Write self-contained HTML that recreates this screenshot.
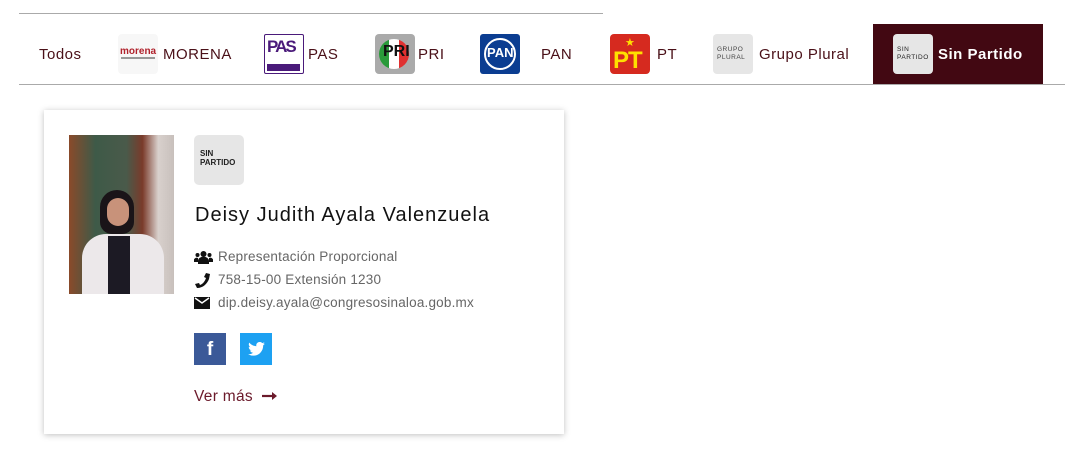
<!DOCTYPE html>
<html><head><meta charset="utf-8"><style>
*{margin:0;padding:0;box-sizing:border-box}
body{width:1065px;height:460px;background:#fff;font-family:"Liberation Sans",sans-serif;position:relative;overflow:hidden}
.a{position:absolute}
.t{position:absolute;top:46px;font-size:15px;color:#4a1018;letter-spacing:.5px}
.lg{position:absolute;top:34px;width:40px;height:40px;border-radius:4px}
.info{position:absolute;left:194px;font-size:13.5px;color:#666}
.info span{position:absolute;left:24px;white-space:nowrap;top:0;letter-spacing:.2px}
</style></head><body>
<div class="a" style="left:19px;top:13px;width:584px;height:1px;background:#aaa"></div>
<div class="a" style="left:19px;top:84px;width:1046px;height:1px;background:#aaa"></div>
<div class="a" style="left:873px;top:24px;width:170px;height:60px;background:#420812"></div>

<div class="t" style="left:39px">Todos</div>
<div class="lg" style="left:118px;background:#f7f7f7"><div class="a" style="left:2px;top:12px;font-size:10px;font-weight:bold;color:#b0222c">morena</div><div class="a" style="left:3px;top:23px;width:34px;height:2px;background:#999"></div></div>
<div class="t" style="left:163px">MORENA</div>
<div class="lg" style="left:264px;border:1.5px solid #4a1a7a;border-radius:2px;background:#fff"><div class="a" style="left:2px;top:2px;font-size:17px;font-weight:bold;color:#4a1a7a;letter-spacing:-2px">PAS</div><div class="a" style="left:2px;top:29px;width:33px;height:7px;background:#4a1a7a"></div></div>
<div class="t" style="left:308px">PAS</div>
<div class="lg" style="left:375px;background:#aaa"><div class="a" style="left:4px;top:5px;width:30px;height:30px;border-radius:15px;background:linear-gradient(90deg,#2a9a3a 33%,#fff 33% 66%,#e03030 66%)"></div><div class="a" style="left:8px;top:9px;font-size:16px;font-weight:bold;color:#111">PRI</div></div>
<div class="t" style="left:418px">PRI</div>
<div class="lg" style="left:480px;background:#0b3d91;border-radius:3px"><div class="a" style="left:4px;top:4px;width:32px;height:32px;border-radius:16px;border:2px solid #fff"></div><div class="a" style="left:7px;top:11px;font-size:13px;font-weight:bold;color:#fff">PAN</div></div>
<div class="t" style="left:541px">PAN</div>
<div class="lg" style="left:610px;background:#d62a1f"><div class="a" style="left:15px;top:2px;color:#ffe000;font-size:11px">★</div><div class="a" style="left:3px;top:13px;font-size:24px;font-weight:bold;color:#ffe000;letter-spacing:-1px">PT</div></div>
<div class="t" style="left:657px">PT</div>
<div class="lg" style="left:713px;background:#e6e6e6"><div class="a" style="left:4px;top:12px;font-size:6.5px;color:#444;line-height:8px;letter-spacing:.5px">GRUPO<br>PLURAL</div></div>
<div class="t" style="left:759px">Grupo Plural</div>
<div class="lg" style="left:893px;background:#e6e6e6"><div class="a" style="left:4px;top:12px;font-size:6.5px;color:#222;line-height:8px;letter-spacing:.5px">SIN<br>PARTIDO</div></div>
<div class="t" style="left:938px;color:#fff;font-weight:bold">Sin Partido</div>

<div class="a" style="left:44px;top:110px;width:520px;height:324px;background:#fff;box-shadow:0 1px 6px rgba(0,0,0,.25)"></div>
<div class="a" style="left:69px;top:135px;width:105px;height:159px;background:linear-gradient(90deg,#8a4a2a 0%,#3e5a48 25%,#4a5a4a 55%,#7a3a2a 70%,#d8d0cc 85%,#c8c0bc)"></div>
<div class="a" style="left:100px;top:190px;width:34px;height:44px;border-radius:17px 17px 12px 12px;background:#1a1418"></div>
<div class="a" style="left:107px;top:198px;width:22px;height:28px;border-radius:11px;background:#c8927a"></div>
<div class="a" style="left:82px;top:234px;width:82px;height:60px;border-radius:24px 24px 0 0;background:#ece8ea"></div>
<div class="a" style="left:108px;top:236px;width:22px;height:58px;background:#1c1a24"></div>
<div class="a" style="left:194px;top:135px;width:50px;height:50px;border-radius:5px;background:#e6e6e6"><div class="a" style="left:6px;top:14px;font-size:8px;font-weight:bold;color:#222;line-height:9px">SIN<br>PARTIDO</div></div>
<div class="a" style="left:195px;top:204px;font-size:20px;color:#111;letter-spacing:1px;white-space:nowrap">Deisy Judith Ayala Valenzuela</div>
<div class="info" style="top:249px"><svg class="a" style="left:0;top:2px" width="19" height="13" viewBox="0 0 19 13"><circle cx="9.5" cy="3" r="3" fill="#111"/><circle cx="3.5" cy="4" r="2" fill="#111"/><circle cx="15.5" cy="4" r="2" fill="#111"/><path d="M4 13v-3a5 4 0 0 1 11 0v3z M0 11a3 3 0 0 1 4-4v4z M19 11a3 3 0 0 0-4-4v4z" fill="#111"/></svg><span>Representación Proporcional</span></div>
<div class="info" style="top:272px"><svg class="a" style="left:1px;top:1px" width="15" height="15" viewBox="0 0 15 15"><path d="M11 0l4 1-1 5c-2 5-6 9-12 9l-2-4 4-1 1 2c3-1 5-4 6-7l-2-1z" fill="#111"/></svg><span>758-15-00 Extensión 1230</span></div>
<div class="info" style="top:295px"><svg class="a" style="left:0;top:2px" width="16" height="12" viewBox="0 0 16 12"><rect width="16" height="12" fill="#111"/><path d="M1 1l7 5 7-5" stroke="#fff" stroke-width="1.5" fill="none"/></svg><span>dip.deisy.ayala@congresosinaloa.gob.mx</span></div>
<div class="a" style="left:194px;top:333px;width:32px;height:32px;background:#3b5998;color:#fff;font-weight:bold;font-size:19px;text-align:center;line-height:34px">f</div>
<div class="a" style="left:240px;top:333px;width:32px;height:32px;background:#1da1f2"><svg style="position:absolute;left:8px;top:9px" width="17" height="14" viewBox="0 0 24 20"><path d="M24 2.4a10 10 0 0 1-2.8.8A5 5 0 0 0 23.3.4a10 10 0 0 1-3.1 1.2A4.9 4.9 0 0 0 11.8 6 14 14 0 0 1 1.7.9a4.9 4.9 0 0 0 1.5 6.6 4.9 4.9 0 0 1-2.2-.6 4.9 4.9 0 0 0 3.9 4.9 5 5 0 0 1-2.2.1 4.9 4.9 0 0 0 4.6 3.4A9.900 9.900 0 0 1 0 17.300 14 14 0 0 0 7.500 19.500c9 0 14-7.500 14-14v-.6A10 10 0 0 0 24 2.400z" fill="#fff"/></svg></div>
<div class="a" style="left:194px;top:388px;font-size:15.5px;color:#6b1a2b;letter-spacing:.3px">Ver más</div>
<svg class="a" style="left:262px;top:391px" width="16" height="10" viewBox="0 0 16 10"><path d="M0 5h12" stroke="#6b1a2b" stroke-width="2.2"/><path d="M10 1l5 4-5 4z" fill="#6b1a2b"/></svg>
</body></html>
